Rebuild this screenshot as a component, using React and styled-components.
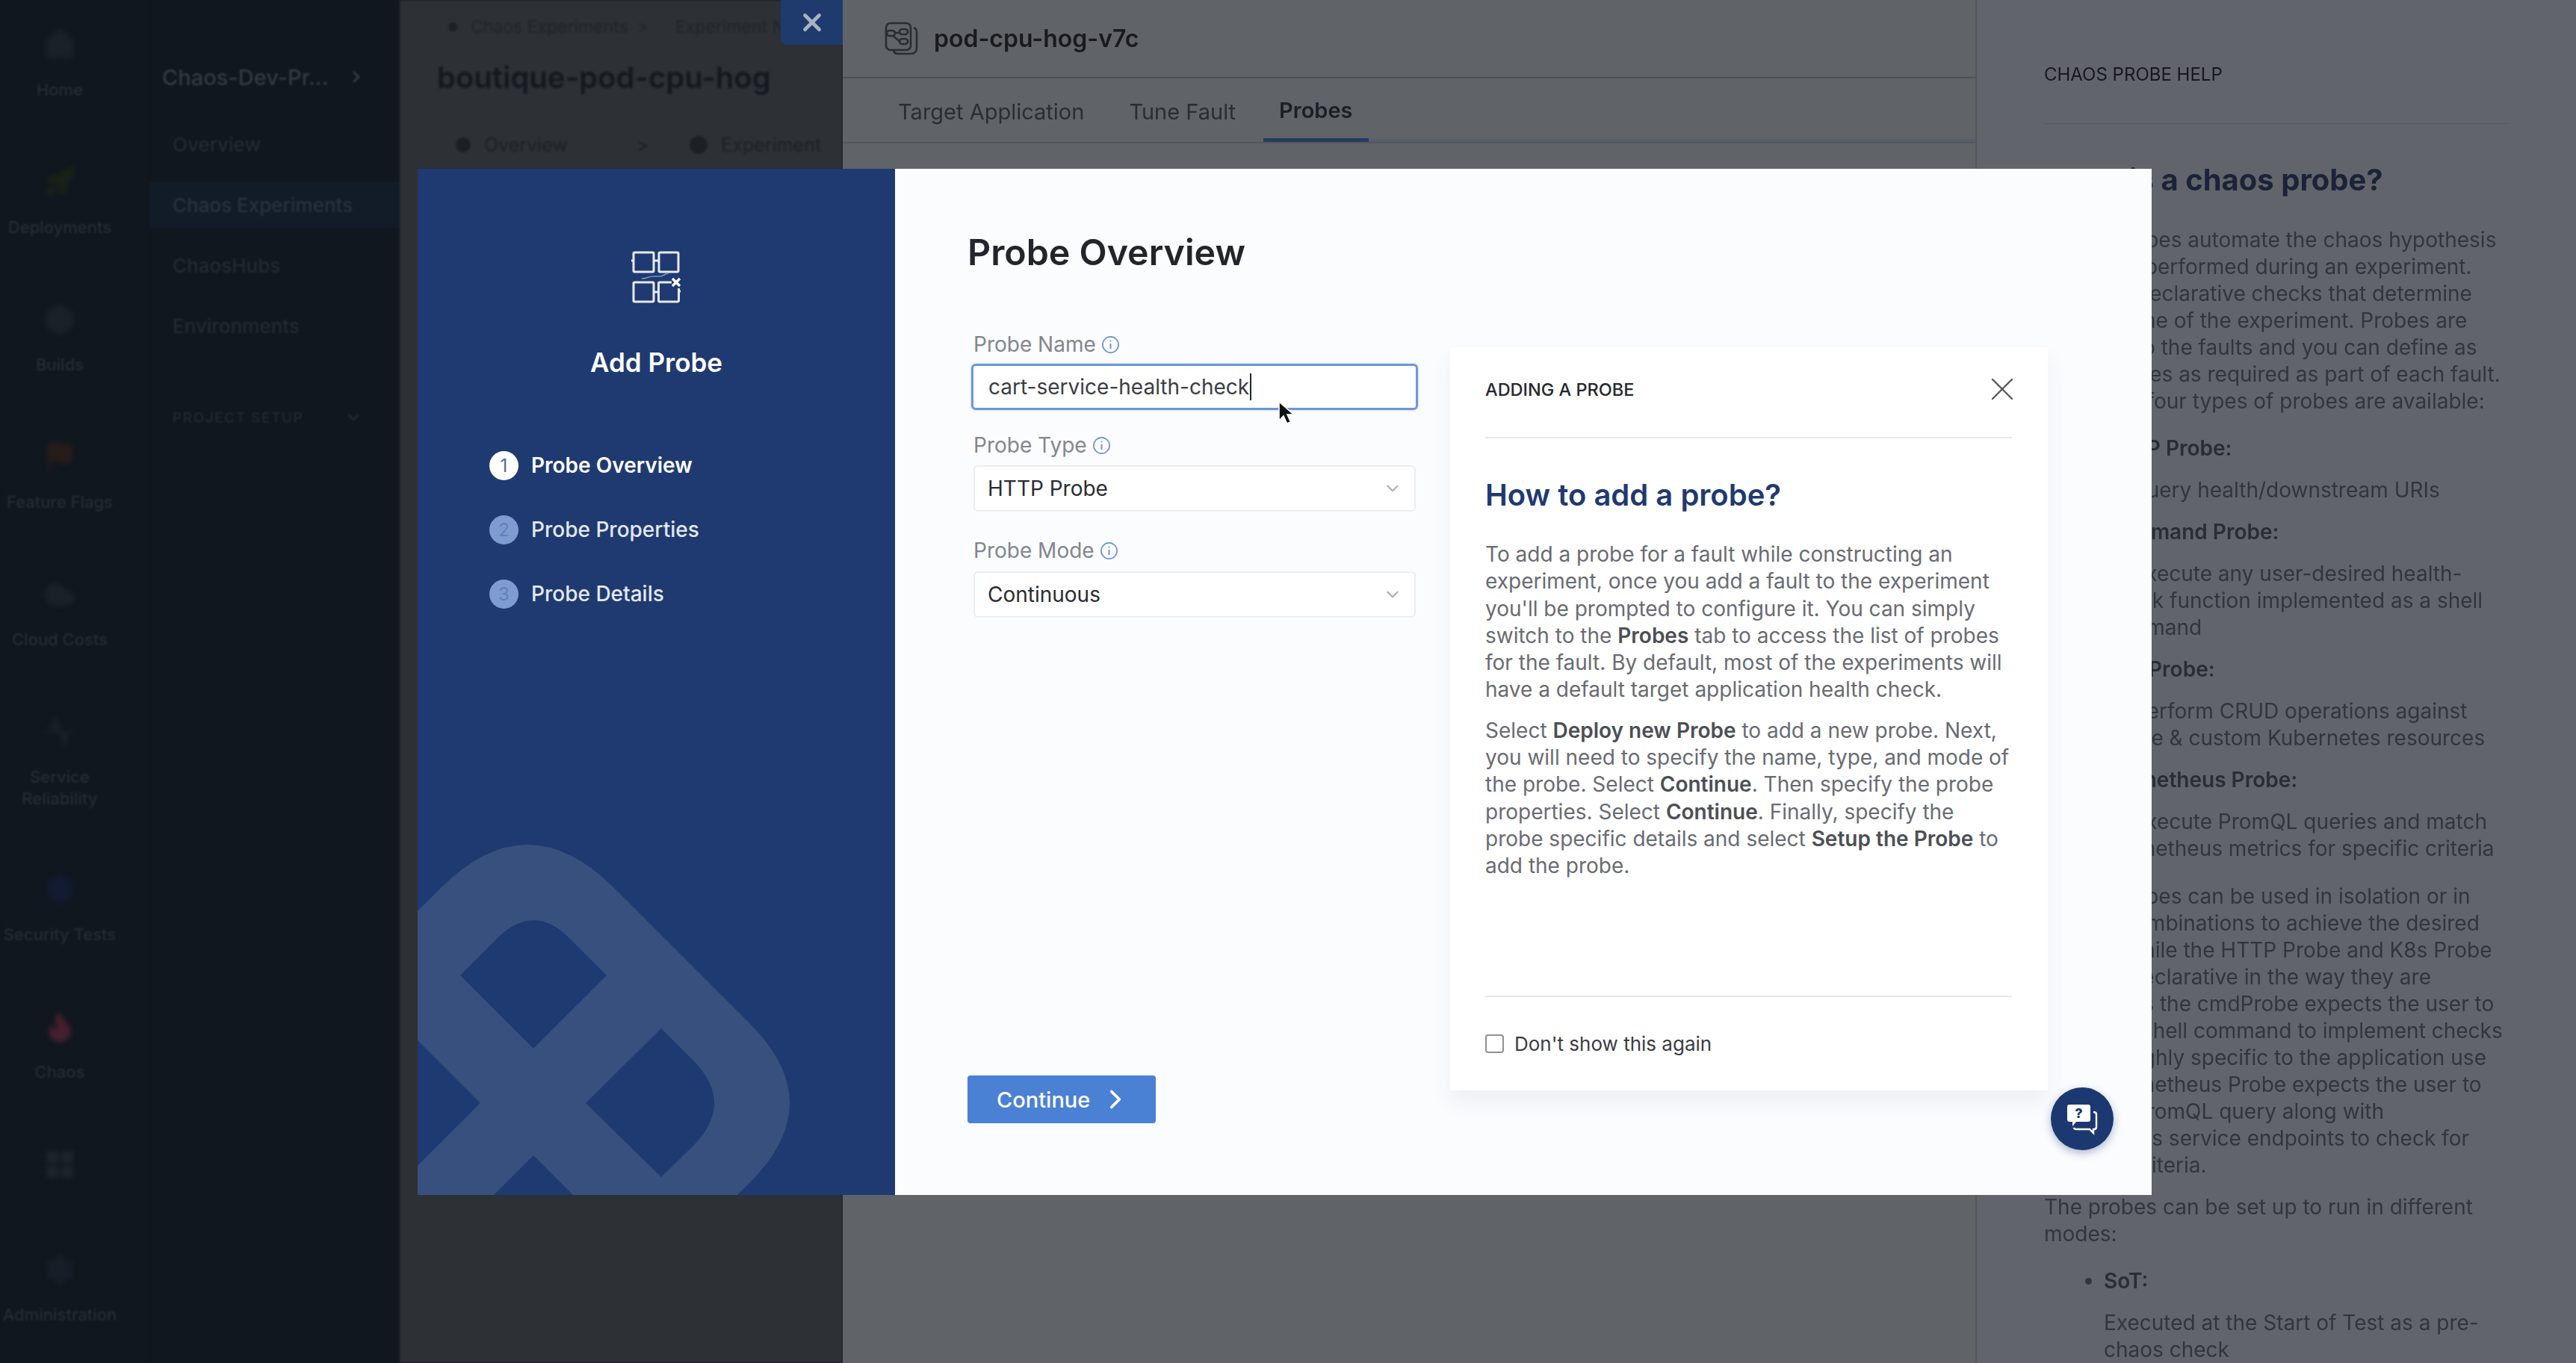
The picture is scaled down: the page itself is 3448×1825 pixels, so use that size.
import React from "react";
import styled, { createGlobalStyle } from "styled-components";
import {
  Home,
  Rocket,
  Box,
  Flag,
  Cloud,
  Activity,
  Shield,
  LayoutGrid,
  Settings,
  Flame,
  ChevronRight,
  ChevronDown,
  X,
} from "lucide-react";

const Global = createGlobalStyle`
  html, body { margin: 0; padding: 0; background: #10171f; }
  body { font-family: "Inter", "Liberation Sans", sans-serif; }
  * { box-sizing: border-box; }
`;

const railItems = [
  { label: "Home", icon: Home, color: "#1a2129", height: 184 },
  { label: "Deployments", icon: Rocket, color: "#1a2118", height: 184 },
  { label: "Builds", icon: Box, color: "#1a2129", height: 184 },
  { label: "Feature Flags", icon: Flag, color: "#261d1a", height: 184 },
  { label: "Cloud Costs", icon: Cloud, color: "#1a2229", height: 184 },
  { label: "Service Reliability", icon: Activity, color: "#1a2129", height: 211 },
  { label: "Security Tests", icon: Shield, color: "#121b30", height: 184 },
  { label: "Chaos", icon: Flame, color: "#47202e", height: 184 },
  { label: "", icon: LayoutGrid, color: "#1c242c", height: 141 },
  { label: "Administration", icon: Settings, color: "#181e27", height: 185 },
];

const subNavItems = ["Overview", "Chaos Experiments", "ChaosHubs", "Environments"];
const steps = ["Probe Overview", "Probe Properties", "Probe Details"];

export default function App() {
  return (
    <Page>
      <Global />
      <Rail>
        {railItems.map((item) => (
          <RailItem key={item.label + item.color} $height={item.height}>
            <RailIcon>
              <item.icon size={44} color={item.color} fill={item.color} />
            </RailIcon>
            <RailLabel>{item.label}</RailLabel>
          </RailItem>
        ))}
      </Rail>

      <SubNav>
        <ProjectRow>
          <span>Chaos-Dev-Pr...</span>
          <ChevronRight size={24} strokeWidth={3} />
        </ProjectRow>
        {subNavItems.map((item, i) => (
          <SubNavLink key={item} $active={i === 1}>
            {item}
          </SubNavLink>
        ))}
        <SetupRow>
          <span>PROJECT SETUP</span>
          <ChevronDown size={24} strokeWidth={3} />
        </SetupRow>
      </SubNav>

      <ExperimentPane>
        <CrumbRow $indent={15}>
          <CrumbDot $size={12} />
          <span>Chaos Experiments</span>
          <CrumbSep $before={-6} $after={18}>&gt;</CrumbSep>
          <span>Experiment Name</span>
        </CrumbRow>
        <ExperimentTitle>boutique-pod-cpu-hog</ExperimentTitle>
        <CrumbRow $indent={25} $low>
          <CrumbDot $size={20} />
          <span>Overview</span>
          <CrumbSep $before={74} $after={37}>&gt;</CrumbSep>
          <CrumbDot $size={24} />
          <span>Experiment</span>
        </CrumbRow>
      </ExperimentPane>

      <FaultPane>
        <FaultHeader>
          <FaultIcon />
          <FaultName>pod-cpu-hog-v7c</FaultName>
        </FaultHeader>
        <Tabs>
          <Tab>Target Application</Tab>
          <Tab>Tune Fault</Tab>
          <Tab $active>Probes</Tab>
          <TabRest />
        </Tabs>
      </FaultPane>

      <HelpPane>
        <HelpCaption>CHAOS PROBE HELP</HelpCaption>
        <HelpHeading>What is a chaos probe?</HelpHeading>
        <HelpText>
          Chaos probes automate the chaos hypothesis
          <br />
          validation performed during an experiment.
          <br />
          They are declarative checks that determine
          <br />
          the outcome of the experiment. Probes are
          <br />
          attached to the faults and you can define as
          <br />
          many probes as required as part of each fault.
          <br />
          Currently, four types of probes are available:
        </HelpText>
        <HelpList>
          <li>
            <b>HTTP Probe:</b>
            <p>To query health/downstream URIs</p>
          </li>
          <li>
            <b>Command Probe:</b>
            <p>
              To execute any user-desired health-
              <br />
              check function implemented as a shell
              <br />
              command
            </p>
          </li>
          <li>
            <b>K8s Probe:</b>
            <p>
              To perform CRUD operations against
              <br />
              native &amp; custom Kubernetes resources
            </p>
          </li>
          <li>
            <b>Prometheus Probe:</b>
            <p>
              To execute PromQL queries and match
              <br />
              Prometheus metrics for specific criteria
            </p>
          </li>
        </HelpList>
        <HelpText $tight>
          Chaos probes can be used in isolation or in
          <br />
          various combinations to achieve the desired
          <br />
          results. While the HTTP Probe and K8s Probe
          <br />
          are fully declarative in the way they are
          <br />
          defined, as the cmdProbe expects the user to
          <br />
          provide a shell command to implement checks
          <br />
          that are highly specific to the application use
          <br />
          case. Prometheus Probe expects the user to
          <br />
          supply a PromQL query along with
          <br />
          Prometheus service endpoints to check for
          <br />
          success criteria.
        </HelpText>
        <HelpText>
          The probes can be set up to run in different
          <br />
          modes:
        </HelpText>
        <HelpList $last>
          <li>
            <b>SoT:</b>
            <p>
              Executed at the Start of Test as a pre-
              <br />
              chaos check
            </p>
          </li>
        </HelpList>
      </HelpPane>

      <DrawerClose>
        <X size={38} strokeWidth={3} />
      </DrawerClose>

      <Modal>
        <WizardSide>
          <WatermarkLayer>
            <WatermarkSvg />
          </WatermarkLayer>
          <WizardIconWrap>
            <WizardIconSvg />
          </WizardIconWrap>
          <WizardTitle>Add Probe</WizardTitle>
          <StepList>
            {steps.map((step, i) => (
              <Step key={step} $active={i === 0}>
                <StepDot $active={i === 0}>{i + 1}</StepDot>
                {step}
              </Step>
            ))}
          </StepList>
        </WizardSide>

        <WizardMain>
          <FormColumn>
            <FormTitle>Probe Overview</FormTitle>
            <Field $after={29}>
              <FieldLabel>
                Probe Name <InfoIcon />
              </FieldLabel>
              <TextBox>
                cart-service-health-check
                <Caret />
                <PointerWrap>
                  <PointerSvg />
                </PointerWrap>
              </TextBox>
            </Field>
            <Field $gap={9} $after={34}>
              <FieldLabel>
                Probe Type <InfoIcon />
              </FieldLabel>
              <SelectBox>
                HTTP Probe
                <ChevronDown size={26} color="#aeb1b6" strokeWidth={2.2} />
              </SelectBox>
            </Field>
            <Field $gap={10} $after={0}>
              <FieldLabel>
                Probe Mode <InfoIcon />
              </FieldLabel>
              <SelectBox>
                Continuous
                <ChevronDown size={26} color="#aeb1b6" strokeWidth={2.2} />
              </SelectBox>
            </Field>
            <ContinueButton>
              Continue
              <ChevronRight size={42} strokeWidth={2.2} />
            </ContinueButton>
          </FormColumn>

          <GuideCard>
            <GuideHead>
              <GuideCaption>ADDING A PROBE</GuideCaption>
              <GuideClose>
                <X size={52} color="#55585f" strokeWidth={1.1} />
              </GuideClose>
            </GuideHead>
            <GuideHeading>How to add a probe?</GuideHeading>
            <GuideText>
              To add a probe for a fault while constructing an
              <br />
              experiment, once you add a fault to the experiment
              <br />
              you'll be prompted to configure it. You can simply
              <br />
              switch to the <b>Probes</b> tab to access the list of probes
              <br />
              for the fault. By default, most of the experiments will
              <br />
              have a default target application health check.
            </GuideText>
            <GuideText>
              Select <b>Deploy new Probe</b> to add a new probe. Next,
              <br />
              you will need to specify the name, type, and mode of
              <br />
              the probe. Select <b>Continue</b>. Then specify the probe
              <br />
              properties. Select <b>Continue</b>. Finally, specify the
              <br />
              probe specific details and select <b>Setup the Probe</b> to
              <br />
              add the probe.
            </GuideText>
            <GuideFoot>
              <CheckBox />
              Don't show this again
            </GuideFoot>
          </GuideCard>

          <ChatButton>
            <ChatSvg />
          </ChatButton>
        </WizardMain>
      </Modal>
    </Page>
  );
}

function FaultIcon() {
  return (
    <svg width="46" height="46" viewBox="0 0 46 46" fill="none" stroke="#2a2d31" strokeWidth="2.6">
      <rect x="2" y="2" width="33" height="36" rx="6" />
      <path d="M39 8c3 1 4 3 4 6v21c0 5-3 8-8 8H18c-3 0-5-1-6-4" />
      <rect x="3" y="12" width="11" height="7" rx="3.5" />
      <rect x="20" y="10" width="11" height="7" rx="3.5" />
      <rect x="20" y="23" width="11" height="7" rx="3.5" />
      <path d="M14 15h6M11 19l9 7" />
    </svg>
  );
}

function InfoIcon() {
  return (
    <svg width="25" height="25" viewBox="0 0 25 25" fill="none" stroke="#6c93d2" strokeWidth="1.7">
      <circle cx="12.5" cy="12.5" r="10.6" />
      <path d="M12.5 11v7" strokeWidth="2" />
      <circle cx="12.5" cy="7.5" r="1" fill="#6c93d2" stroke="none" />
    </svg>
  );
}

function WizardIconSvg() {
  return (
    <svg width="68" height="72" viewBox="0 0 68 72" fill="none" stroke="#e4e9f3" strokeWidth="3">
      <rect x="3" y="3" width="27" height="26" rx="1.5" />
      <rect x="37" y="3" width="26" height="26" rx="1.5" />
      <rect x="3" y="43" width="27" height="26" rx="1.5" />
      <path d="M54 43H38a1.5 1.5 0 0 0-1.5 1.5v23A1.5 1.5 0 0 0 38 69h24a1.5 1.5 0 0 0 1.5-1.5V51" />
      <path d="M0 14h3M30 14h7M30 56h7M63 55h3" />
      <path d="M14 38c8 0 8-3 16-3h8c6 0 6-4 12-4" strokeWidth="1.6" stroke="#7f92b8" />
      <path d="M55 38l10 10M65 38L55 48" strokeWidth="3.4" stroke="#ffffff" />
    </svg>
  );
}

function WatermarkSvg() {
  const d = [
    "M-100 1094L31 963Q147 847 263 963L445 1145Q551 1251 445 1357L302 1500H-100Z",
    "M107 1030Q155 982 203 1030L253 1080L155 1178L57 1080Z",
    "M225 1251L326 1151L368 1193Q426 1251 368 1309L326 1350Z",
    "M84 1251L-100 1067V1435Z",
    "M155 1321L-50 1526H360Z",
  ].join("");
  return (
    <svg width="640" height="534" viewBox="0 840 640 534">
      <path d={d} fill="#37507e" fillRule="evenodd" />
    </svg>
  );
}

function PointerSvg() {
  return (
    <svg width="26" height="36" viewBox="0 0 26 36">
      <path
        d="M3 2v25l6-6 4.5 10 5-2-4.5-10h8.5z"
        fill="#111"
        stroke="#fff"
        strokeWidth="1.6"
      />
    </svg>
  );
}

function ChatSvg() {
  return (
    <svg width="44" height="44" viewBox="0 0 44 44">
      <path
        d="M5 3h25a3 3 0 0 1 3 3v17a3 3 0 0 1-3 3H14l-5 6v-6H5a3 3 0 0 1-3-3V6a3 3 0 0 1 3-3z"
        fill="#fff"
      />
      <path
        d="M37 13c2 0 4 1 4 3v17c0 2-1 3-3 3h-1v5l-5-5H14c-2 0-3-1-3.5-2"
        fill="none"
        stroke="#fff"
        strokeWidth="2.4"
      />
      <text x="17.5" y="21" textAnchor="middle" fontSize="18" fontWeight="800" fill="#1c3871" fontFamily="Inter, sans-serif">
        ?
      </text>
    </svg>
  );
}

const Page = styled.div`
  position: relative;
  display: flex;
  width: 3448px;
  height: 1825px;
  overflow: hidden;
  background: #10171f;
`;

const Rail = styled.nav`
  flex: 0 0 200px;
  background: #10171f;
  filter: blur(1.2px);
`;

const RailItem = styled.div`
  width: 160px;
  height: ${(p) => p.$height}px;
  padding-top: 38px;
  display: flex;
  flex-direction: column;
  align-items: center;
`;

const RailIcon = styled.div`
  height: 44px;
  margin-bottom: 24px;
  filter: blur(3px);
`;

const RailLabel = styled.div`
  width: 160px;
  font-size: 22px;
  line-height: 29px;
  font-weight: 500;
  text-align: center;
  color: #262c34;
`;

const SubNav = styled.nav`
  flex: 0 0 335px;
  background: #10171f;
  padding-top: 83px;
  filter: blur(1.2px);
`;

const ProjectRow = styled.div`
  display: flex;
  align-items: center;
  justify-content: space-between;
  height: 40px;
  padding: 0 46px 0 17px;
  font-size: 29px;
  font-weight: 500;
  color: #333a43;
  margin-bottom: 30px;
`;

const SubNavLink = styled.div`
  height: ${(p) => (p.$active ? "61px" : "81px")};
  margin: ${(p) => (p.$active ? "10px 0" : "0")};
  display: flex;
  align-items: center;
  padding-left: 31px;
  font-size: 26px;
  font-weight: 500;
  color: ${(p) => (p.$active ? "#28313c" : "#242a32")};
  background: ${(p) => (p.$active ? "#121c28" : "transparent")};
`;

const SetupRow = styled.div`
  display: flex;
  align-items: center;
  justify-content: space-between;
  margin-top: 70px;
  padding: 0 50px 0 31px;
  font-size: 19px;
  font-weight: 600;
  letter-spacing: 1.5px;
  color: #21272f;
`;

const ExperimentPane = styled.section`
  flex: 0 0 593px;
  background: #2d3035;
  padding: 22px 0 0 50px;
  filter: blur(1.4px);
`;

const CrumbRow = styled.div`
  display: flex;
  align-items: center;
  gap: 18px;
  height: 28px;
  margin-top: ${(p) => (p.$low ? "44px" : "0")};
  padding-left: ${(p) => p.$indent}px;
  font-size: ${(p) => (p.$low ? "25px" : "23px")};
  white-space: nowrap;
  color: ${(p) => (p.$low ? "#1c1f23" : "#202328")};
`;

const CrumbDot = styled.span`
  flex: none;
  width: ${(p) => p.$size}px;
  height: ${(p) => p.$size}px;
  border-radius: 50%;
  background: #1c1f23;
`;

const CrumbSep = styled.span`
  margin: 0 ${(p) => p.$after}px 0 ${(p) => p.$before}px;
`;

const ExperimentTitle = styled.h1`
  margin: 22px 0 0;
  font-size: 40px;
  line-height: 64px;
  font-weight: 600;
  color: #14171d;
  white-space: nowrap;
`;

const FaultPane = styled.section`
  flex: 0 0 1518px;
  background: #606368;
  border-right: 2px solid #54575c;
  filter: blur(0.6px);
`;

const FaultHeader = styled.header`
  height: 105px;
  display: flex;
  align-items: center;
  gap: 20px;
  padding: 0 0 0 56px;
  border-bottom: 2px solid #4d5055;
`;

const FaultName = styled.div`
  font-size: 32px;
  font-weight: 600;
  color: #181a1e;
`;

const Tabs = styled.div`
  height: 87px;
  display: flex;
  align-items: stretch;
  padding: 4px 0 0 74px;
  border-bottom: 2px solid #54575c;
`;

const Tab = styled.div`
  display: flex;
  align-items: center;
  padding: ${(p) => (p.$active ? "0 21px" : "0")};
  margin: ${(p) => (p.$active ? "0" : "0 60px 0 0")};
  font-size: 29px;
  font-weight: ${(p) => (p.$active ? 600 : 400)};
  color: ${(p) => (p.$active ? "#1c1f26" : "#2a2d33")};
  border-bottom: ${(p) => (p.$active ? "5px solid #263b63" : "none")};
  &:nth-child(2) {
    margin-right: 37px;
  }
`;

const TabRest = styled.div`
  flex: 1;
  align-self: flex-end;
  height: 4px;
  background: #585f6b;
`;

const HelpPane = styled.aside`
  flex: 1;
  min-width: 0;
  background: #61646a;
  padding: 85px 90px 0 90px;
  color: #32353b;
  font-size: 28px;
  line-height: 36px;
  filter: blur(0.6px);
`;

const HelpCaption = styled.div`
  font-size: 24px;
  line-height: 30px;
  color: #16181c;
  padding-bottom: 50px;
  border-bottom: 1px solid #565a60;
`;

const HelpHeading = styled.h2`
  margin: 51px 0 38px;
  font-size: 40px;
  line-height: 48px;
  font-weight: 700;
  color: #1b2338;
  white-space: nowrap;
`;

const HelpText = styled.p`
  margin: 0 0 ${(p) => (p.$tight ? "20px" : "27px")};
  white-space: nowrap;
`;

const HelpList = styled.ul`
  margin: 0 0 ${(p) => (p.$last ? "0" : "28px")};
  padding-left: 80px;
  white-space: nowrap;
  b {
    font-weight: 600;
    color: #2a2d33;
  }
  p {
    margin: 20px 0 20px;
  }
`;

const DrawerClose = styled.button`
  position: absolute;
  top: 0;
  left: 1045px;
  width: 83px;
  height: 60px;
  padding: 0;
  border: 0;
  border-radius: 0 0 0 8px;
  background: #1f3a6c;
  color: #a9b2c2;
  display: flex;
  align-items: center;
  justify-content: center;
`;

const Modal = styled.div`
  position: absolute;
  top: 226px;
  left: 559px;
  width: 2321px;
  height: 1374px;
  display: flex;
  background: #fbfcfe;
`;

const WizardSide = styled.div`
  position: relative;
  flex: 0 0 639px;
  display: flex;
  flex-direction: column;
  padding-top: 109px;
  background: #1f3a70;
  color: #fff;
  overflow: hidden;
`;

const WatermarkLayer = styled.div`
  position: absolute;
  left: 0;
  bottom: 0;
  line-height: 0;
`;

const WizardIconWrap = styled.div`
  position: relative;
  display: flex;
  justify-content: center;
  line-height: 0;
`;

const WizardTitle = styled.h2`
  position: relative;
  margin: 56px 0 0;
  font-size: 35px;
  line-height: 44px;
  font-weight: 600;
  text-align: center;
`;

const StepList = styled.ol`
  position: relative;
  margin: 96px 0 0;
  padding: 0 0 0 96px;
  list-style: none;
  display: flex;
  flex-direction: column;
  gap: 46px;
`;

const Step = styled.li`
  display: flex;
  align-items: center;
  gap: 17px;
  height: 40px;
  font-size: 28px;
  font-weight: ${(p) => (p.$active ? 600 : 500)};
  color: ${(p) => (p.$active ? "#ffffff" : "#e3e8f2")};
`;

const StepDot = styled.span`
  width: 39px;
  height: 39px;
  border-radius: 50%;
  display: flex;
  align-items: center;
  justify-content: center;
  font-size: 24px;
  font-weight: 400;
  background: ${(p) => (p.$active ? "#ffffff" : "#7f9bd0")};
  color: ${(p) => (p.$active ? "#5a6b8e" : "#5f80bf")};
`;

const WizardMain = styled.div`
  position: relative;
  flex: 1;
  display: flex;
  padding: 0 139px 0 97px;
  gap: 41px;
`;

const FormColumn = styled.div`
  flex: 0 0 605px;
  display: flex;
  flex-direction: column;
`;

const FormTitle = styled.h2`
  margin: 77px 0 70px;
  font-size: 48.3px;
  line-height: 70px;
  font-weight: 600;
  color: #22252b;
`;

const Field = styled.div`
  margin: 0 0 ${(p) => p.$after}px 8px;
  width: 592px;
  display: flex;
  flex-direction: column;
  gap: ${(p) => p.$gap ?? 8}px;
`;

const FieldLabel = styled.label`
  display: flex;
  align-items: center;
  gap: 7px;
  height: 36px;
  font-size: 28px;
  color: #83868d;
`;

const TextBox = styled.div`
  position: relative;
  display: flex;
  align-items: center;
  height: 62px;
  margin: 0 -3px;
  padding-left: 20px;
  background: #fff;
  border: 3px solid #6d97d8;
  border-radius: 6px;
  box-shadow: 0 0 3px rgba(90, 135, 210, 0.45);
  font-size: 28px;
  color: #3a3d43;
`;

const Caret = styled.span`
  width: 2px;
  height: 36px;
  margin-left: 1px;
  background: #22252a;
`;

const PointerWrap = styled.span`
  position: absolute;
  left: 406px;
  top: 46px;
  line-height: 0;
`;

const SelectBox = styled.div`
  display: flex;
  align-items: center;
  justify-content: space-between;
  height: 62px;
  padding: 0 16px 0 17px;
  background: #fff;
  border: 2px solid #ecedf0;
  border-radius: 6px;
  font-size: 28px;
  color: #2a2c31;
`;

const ContinueButton = styled.button`
  margin-top: auto;
  margin-bottom: 96px;
  align-self: flex-start;
  width: 252px;
  height: 64px;
  padding: 0 33px 0 39px;
  border: 0;
  border-radius: 4px;
  display: flex;
  align-items: center;
  justify-content: space-between;
  background: #4a81d4;
  color: #fff;
  font-family: inherit;
  font-size: 29px;
  font-weight: 500;
`;

const GuideCard = styled.div`
  flex: 0 0 800px;
  height: 995px;
  margin-top: 239px;
  padding: 0 48px 0 47px;
  display: flex;
  flex-direction: column;
  background: #fff;
  box-shadow: 0 16px 26px rgba(60, 70, 90, 0.07);
`;

const GuideHead = styled.div`
  flex: 0 0 122px;
  display: flex;
  align-items: center;
  justify-content: space-between;
  padding-bottom: 8px;
  border-bottom: 2px solid #e7e8ea;
  color: #222;
`;

const GuideCaption = styled.div`
  font-size: 23.5px;
  font-weight: 500;
  color: #25272b;
`;

const GuideClose = styled.span`
  margin-right: -13px;
  line-height: 0;
`;

const GuideHeading = styled.h3`
  margin: 51px 0 36px;
  font-size: 40px;
  line-height: 50px;
  font-weight: 600;
  color: #1f3a70;
`;

const GuideText = styled.p`
  margin: 0 0 18px;
  font-size: 28px;
  line-height: 36.3px;
  white-space: nowrap;
  color: #686b72;
  b {
    font-weight: 600;
    color: #4c4f55;
  }
`;

const GuideFoot = styled.div`
  margin-top: auto;
  height: 127px;
  display: flex;
  align-items: center;
  gap: 14px;
  border-top: 2px solid #e7e8ea;
  font-size: 26px;
  color: #3a3c42;
`;

const CheckBox = styled.span`
  width: 25px;
  height: 25px;
  border: 2px solid #8f9196;
  border-radius: 4px;
  background: #fff;
`;

const ChatButton = styled.button`
  position: absolute;
  left: 1547px;
  top: 1230px;
  width: 84px;
  height: 84px;
  padding: 0;
  border: 0;
  border-radius: 50%;
  display: flex;
  align-items: center;
  justify-content: center;
  background: #1c3871;
  box-shadow: 0 4px 12px rgba(28, 56, 113, 0.35);
`;
